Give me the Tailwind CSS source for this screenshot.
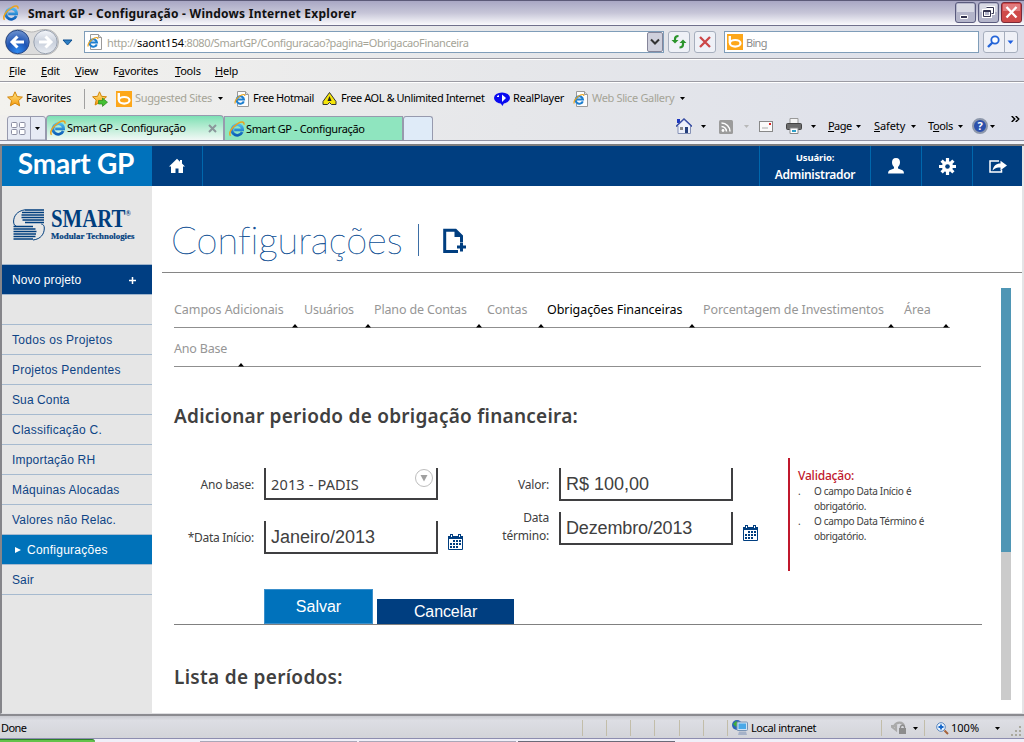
<!DOCTYPE html>
<html lang="pt-BR">
<head>
<meta charset="utf-8">
<title>Smart GP - Configuração</title>
<script src="https://cdn.jsdelivr.net/npm/@tailwindcss/browser@4"></script>
</head>
<body class="w-[1024px] h-[742px] overflow-hidden bg-white font-['Noto_Sans',sans-serif] text-[11px] text-black">
<svg class="absolute w-0 h-0">
  <defs>
    <linearGradient id="ieb" x1="0" y1="0" x2="0" y2="1"><stop offset="0" stop-color="#4cb8f0"/><stop offset="1" stop-color="#0d5fb8"/></linearGradient>
    <radialGradient id="back" cx=".5" cy=".9" r=".9"><stop offset="0" stop-color="#2f8af0"/><stop offset=".5" stop-color="#1f55b5"/><stop offset="1" stop-color="#6f93cf"/></radialGradient>
    <linearGradient id="fwd" x1="0" y1="0" x2="0" y2="1"><stop offset="0" stop-color="#f4f6fa"/><stop offset=".5" stop-color="#c9d0dc"/><stop offset="1" stop-color="#e8ecf2"/></linearGradient>
    <linearGradient id="star" x1="0" y1="0" x2="0" y2="1"><stop offset="0" stop-color="#ffe98a"/><stop offset="1" stop-color="#f59a0c"/></linearGradient>
  </defs>
  <symbol id="ie" viewBox="0 0 16 16">
    <path d="M13.2 11A5.300 5.300 0 1 1 13.600 8.900H5.200" fill="none" stroke="url(#ieb)" stroke-width="2.800"/>
    <path d="M1.600 14.800C-1 12 3.500 5.500 9 2.300c3.500-2 6.400-1.900 6 1.300" fill="none" stroke="#eba31e" stroke-width="1.500"/>
  </symbol>
  <symbol id="iepage" viewBox="0 0 16 16">
    <path d="M3.500.5h8l3 3v12h-11z" fill="#fdfdfd" stroke="#9a9a9a"/><path d="M11.500.5v3h3" fill="#ddd" stroke="#9a9a9a"/>
    <path d="M9.800 10.300A3.700 3.700 0 1 1 10 8.600H4" fill="none" stroke="#1d7fd0" stroke-width="2"/>
    <path d="M1.200 12.500C.3 10 4 5.500 7.500 4c2-.8 3.500-.8 3.300 1" fill="none" stroke="#eba31e" stroke-width="1.200"/>
  </symbol>
  <symbol id="bing" viewBox="0 0 16 16"><path d="M0 0h16v16H0z" fill="#fda71a"/><path d="M2.800 2v7" stroke="#fff" stroke-width="2.400"/><ellipse cx="8.200" cy="9.300" rx="5.300" ry="3.300" fill="none" stroke="#fff" stroke-width="2.200"/></symbol>
  <symbol id="dn" viewBox="0 0 5 3"><path d="M0 0h5L2.500 3z" fill="currentColor"/></symbol>
  <symbol id="cal" viewBox="0 0 15 16"><path d="M.5 3.500h14v12H.5z" fill="#fff" stroke="#003e80"/><path d="M0 2h15v3H0zM2 0h3v3H2zM10 0h3v3h-3z" fill="#003e80"/><path d="M3 1h1v2H3zM11 1h1v2h-1z" fill="#fff"/><path d="M5 6h2v2H5zM8 6h2v2H8zM11 6h2v2h-2zM2 9h2v2H2zM5 9h2v2H5zM8 9h2v2H8zM11 9h2v2h-2zM2 12h2v2H2zM5 12h2v2H5zM8 12h2v2H8z" fill="#003e80"/></symbol>
</svg>

<!-- Title bar -->
<div class="h-[26px] border-t border-[#5c5a78] border-b border-b-[#70708c] bg-linear-to-b from-[#a9a7c4] via-[#c7c6d8] to-[#fbfbfd] flex items-center pl-[3px] pr-[2px]">
  <svg class="w-4 h-4"><use href="#ie"/></svg>
  <span class="ml-[9px] mt-px text-[12px] font-bold tracking-[0.24px] whitespace-nowrap text-[#111]">Smart GP - Configuração - Windows Internet Explorer</span>
  <div class="ml-auto flex gap-[2px] -mt-px">
    <svg class="w-[21px] h-[21px]" viewBox="0 0 21 21"><rect x=".5" y=".5" width="20" height="20" rx="2.500" fill="#b4b5ca" stroke="#5a5b7e"/><path d="M2 2h17v8H2z" fill="#d8d9e4"/><path d="M5.500 13.500h7v3h-7z" fill="#33334f" stroke="#fff"/></svg>
    <svg class="w-[21px] h-[21px]" viewBox="0 0 21 21"><rect x=".5" y=".5" width="20" height="20" rx="2.500" fill="#b4b5ca" stroke="#5a5b7e"/><path d="M2 2h17v8H2z" fill="#d8d9e4"/><path d="M8.500 5.500h7v6h-2M5.500 8.500h7v6h-7z" fill="none" stroke="#fff" stroke-width="3"/><path d="M8.500 5.500h7v6h-2M5.500 8.500h7v6h-7zM5.500 9.500h7" fill="none" stroke="#33334f"/></svg>
    <svg class="w-[21px] h-[21px]" viewBox="0 0 21 21"><rect x=".5" y=".5" width="20" height="20" rx="2.500" fill="#cf4a4a" stroke="#7b2a38"/><path d="M2 2h17v7H2z" fill="#e07a7c"/><path d="M5.500 5l10 10.500M15.500 5l-10 10.500" stroke="#fff" stroke-width="2.400"/></svg>
  </div>
</div>

<!-- Address row -->
<div class="h-[33px] bg-linear-to-r from-[#f3f2ee] via-[#e6e7ea] to-[#dcdfea] border-b border-[#9b9ba3] flex items-center pl-1">
  <svg class="w-[72px] h-[28px] shrink-0" viewBox="0 0 72 28">
    <path d="M14 1.500C20 1 22 4 27.500 4S35 1 42 1.500a12.500 12.500 0 0 1 0 25H14a12.500 12.500 0 0 1 0-25z" fill="#dcdcdc" stroke="#b5b5b5"/>
    <circle cx="13.500" cy="14" r="11.700" fill="url(#back)" stroke="#2a4a86"/><path d="M20 14H9M13.500 8.500L8 14l5.500 5.500" fill="none" stroke="#fff" stroke-width="3"/>
    <circle cx="41.500" cy="14" r="11.700" fill="url(#fwd)" stroke="#9aa3b1"/><path d="M35 14h11M41.500 8.500L47 14l-5.500 5.500" fill="none" stroke="#fff" stroke-width="3"/>
    <path d="M59 12h9l-4.500 5z" fill="#2d7fc4" stroke="#0d4f90"/>
  </svg>
  <div class="ml-2 w-[580px] h-[22px] bg-white border border-[#7f9db9] flex items-center pl-[2px] shrink-0">
    <svg class="w-4 h-4"><use href="#iepage"/></svg>
    <span class="ml-[4px] mt-[2px] text-[#a5a497] whitespace-nowrap tracking-[-0.38px]">http://<span class="text-black tracking-[-0.1px]">saont154</span>:8080/SmartGP/Configuracao?pagina=ObrigacaoFinanceira</span>
    <svg class="ml-auto w-4 h-5" viewBox="0 0 16 20"><rect x=".5" y=".5" width="15" height="19" rx="1.500" fill="#cfd0dc" stroke="#85859a"/><path d="M4 7.500l4 4 4-4" fill="none" stroke="#333" stroke-width="2"/></svg>
  </div>
  <svg class="ml-1 w-[22px] h-[22px] shrink-0" viewBox="0 0 22 22"><rect x=".5" y=".5" width="21" height="21" rx="2.500" fill="#eff1f7" stroke="#a6aebd"/><path d="M10.500 5C7.500 5 7 6.500 7 8v2M11.500 16.500c3 0 3.500-1.500 3.500-3v-2" fill="none" stroke="#2b942b" stroke-width="2.200"/><path d="M3.500 9h7L7 12.500zM11.500 12h7L15 8.500z" fill="#2b942b"/></svg>
  <svg class="ml-1 w-[22px] h-[22px] shrink-0" viewBox="0 0 22 22"><rect x=".5" y=".5" width="21" height="21" rx="2.500" fill="#eff1f7" stroke="#a6aebd"/><path d="M6 6l10 10M16 6L6 16" stroke="#cc4647" stroke-width="2.300"/></svg>
  <div class="ml-[8px] w-[255px] h-[22px] bg-white border border-[#7f9db9] flex items-center pl-[2px] shrink-0">
    <svg class="w-4 h-4"><use href="#bing"/></svg><span class="ml-[3px] mt-[2px] tracking-[-0.7px] text-[#8b8b8b]">Bing</span>
  </div>
  <svg class="ml-1 w-[35px] h-[22px] shrink-0" viewBox="0 0 35 22"><rect x=".5" y=".5" width="34" height="21" rx="2.500" fill="#eff1f7" stroke="#a6aebd"/><path d="M21.500 1v20" stroke="#a6aebd"/><circle cx="12" cy="9" r="3.700" fill="#fff" stroke="#2565d8" stroke-width="1.800"/><path d="M9.500 11.500L5 16" stroke="#2565d8" stroke-width="2.400"/><path d="M24.500 9.500h6l-3 3.500z" fill="#1e5fe0"/></svg>
</div>

<!-- Menu row -->
<div class="h-[23px] bg-linear-to-r from-[#f3f2ee] via-[#e6e7ea] to-[#dcdfea] border-t border-t-white border-b border-b-[#9b9ba3] flex items-center pt-[2px] pl-[9px] tracking-[-0.2px]">
  <span class="w-[32px]"><u>F</u>ile</span><span class="w-[34px]"><u>E</u>dit</span><span class="w-[38px]"><u>V</u>iew</span><span class="w-[62px]">F<u>a</u>vorites</span><span class="w-[40px]"><u>T</u>ools</span><span><u>H</u>elp</span>
</div>

<!-- Favorites row -->
<div class="h-[33px] bg-linear-to-r from-[#f3f2ee] via-[#e6e7ea] to-[#dcdfea] border-t border-white flex items-center pb-px pl-[7px] whitespace-nowrap">
  <svg class="w-4 h-4 shrink-0" viewBox="0 0 16 16"><path d="M8 .8l2.200 4.800 5.200.5-3.900 3.500 1.100 5.200L8 12.100l-4.600 2.700 1.100-5.200L.6 6.100l5.200-.5z" fill="url(#star)" stroke="#d38408"/></svg>
  <span class="ml-[3px] w-[58px] tracking-[-0.2px]">Favorites</span>
  <div class="w-px h-5 bg-[#a0a0a0] mr-[7px]"></div>
  <svg class="w-4 h-4 shrink-0" viewBox="0 0 16 16"><path d="M7.500.8l2 4.500 5 .5L10.800 9l1.100 5-4.400-2.500L3.100 14l1.100-5L.6 5.800l5-.5z" fill="url(#star)" stroke="#d38408"/><path d="M6.500 9.500h4V7l5 4.200-5 4.200V13h-4z" fill="#44c034" stroke="#2a8a20" stroke-width=".7"/></svg>
  <svg class="w-4 h-4 ml-2 shrink-0"><use href="#bing"/></svg>
  <span class="ml-[3px] w-[83px] text-[#a5a497] tracking-[-0.33px]">Suggested Sites</span>
  <svg class="w-[5px] h-[3px] mr-[11px]"><use href="#dn"/></svg>
  <svg class="w-4 h-4 shrink-0"><use href="#iepage"/></svg>
  <span class="ml-[3px] w-[70px] tracking-[-0.45px]">Free Hotmail</span>
  <svg class="w-4 h-4 shrink-0 -ml-px" viewBox="0 0 16 16"><path d="M7.500 1.500L1 10.500v3h4.500l2-2 2 2H14v-3z" fill="#f5e50a" stroke="#333"/><path d="M7.500 5l-2 5h4z" fill="#222"/></svg>
  <span class="ml-[3px] w-[153px] tracking-[-0.43px]">Free AOL &amp; Unlimited Internet</span>
  <svg class="w-4 h-4 shrink-0" viewBox="0 0 16 16"><ellipse cx="8" cy="7" rx="8" ry="5.500" fill="#0a0af0"/><path d="M5 10l3.500 5 2-4z" fill="#0a0af0"/><path d="M8 3.500l4 3.500-4 4z" fill="#fff"/><path d="M3 5l2-1v2H3z" fill="#fff"/></svg>
  <span class="ml-[3px] w-[61px] tracking-[-0.3px]">RealPlayer</span>
  <svg class="w-4 h-4 shrink-0 -ml-px"><use href="#iepage"/></svg>
  <span class="ml-[3px] w-[88px] text-[#a5a497] tracking-[-0.35px]">Web Slice Gallery</span>
  <svg class="w-[5px] h-[3px]"><use href="#dn"/></svg>
</div>

<!-- Tab row -->
<div class="h-[26px] bg-linear-to-r from-[#f1f0ee] via-[#e6e7ea] to-[#dcdfea] border-b border-[#9192a4] flex items-end whitespace-nowrap">
  <svg class="ml-[7px] w-[39px] h-[24px] shrink-0" viewBox="0 0 39 24"><path d="M.5 24V3Q.5.5 3 .5h33q2.500 0 2.500 2.500v21z" fill="#e6eaf4" stroke="#979aae"/><path d="M23.500 1v23" stroke="#979aae"/><g fill="#fff" stroke="#8b8ea2"><rect x="4.500" y="6.500" width="5.500" height="5" rx="1"/><rect x="12.500" y="6.500" width="5.500" height="5" rx="1"/><rect x="4.500" y="13.500" width="5.500" height="5" rx="1"/><rect x="12.500" y="13.500" width="5.500" height="5" rx="1"/></g><path d="M28 11h5l-2.500 3z"/></svg>
  <div class="w-[178px] h-[25px] border border-b-0 border-[#979aae] rounded-t-[4px] bg-linear-to-b from-[#7be0b4] to-[#f1f8f6] flex items-center pl-[3px]">
    <svg class="w-4 h-4"><use href="#ie"/></svg><span class="ml-px tracking-[-0.37px]">Smart GP - Configuração</span>
    <svg class="ml-auto mr-[6px] w-[9px] h-[9px]" viewBox="0 0 9 9"><path d="M1 1l7 7M8 1L1 8" stroke="#8b979b" stroke-width="2"/></svg>
  </div>
  <div class="w-[179px] h-[24px] border border-b-0 border-[#979aae] bg-[#8fe5bf] flex items-center pl-[4px] pt-px">
    <svg class="w-4 h-4"><use href="#ie"/></svg><span class="ml-px tracking-[-0.37px]">Smart GP - Configuração</span>
  </div>
  <div class="w-[30px] h-[24px] border border-b-0 border-[#979aae] rounded-t-[3px] bg-[#dfebf8]"></div>
  <div class="ml-[243px] h-[26px] flex items-center pb-[2px]">
    <svg class="w-4 h-4 shrink-0" viewBox="0 0 16 16"><path d="M1 1h3v4H1z" fill="#1d37c0"/><path d="M8 1L.5 8H2v7.500h12.500V8H16z" fill="#eef1fa" stroke="#8591b5"/><path d="M0 8.500L8 1l8 7.500" fill="none" stroke="#3a4fa5" stroke-width="1.500"/><path d="M9 9h3v6H9z" fill="#25407c"/><path d="M4 9h3v3H4z" fill="#888"/></svg>
    <svg class="w-[5px] h-[3px] ml-[9px]"><use href="#dn"/></svg>
    <svg class="w-[14px] h-[14px] ml-[13px] mt-px shrink-0" viewBox="0 0 14 14"><rect width="14" height="14" rx="1.500" fill="#9b9b9b"/><circle cx="4" cy="10.500" r="1.400" fill="#fff"/><path d="M2.500 6.500a5 5 0 0 1 5 5M2.500 3a8.500 8.500 0 0 1 8.500 8.500" fill="none" stroke="#fff" stroke-width="1.500"/></svg>
    <svg class="w-[5px] h-[3px] ml-[11px] text-[#b8b8b8]"><use href="#dn"/></svg>
    <svg class="w-[14px] h-[11px] ml-[10px] shrink-0" viewBox="0 0 14 11"><rect x=".5" y=".5" width="13" height="10" fill="#fafafa" stroke="#888"/><path d="M10 2h2v2h-2z" fill="#d22"/><path d="M3 7h6" stroke="#aaa"/></svg>
    <svg class="w-4 h-4 ml-[13px] shrink-0" viewBox="0 0 16 16"><path d="M4 .5h8V6H4z" fill="#f5f5f5" stroke="#999"/><rect x=".5" y="5.500" width="15" height="6" rx="1" fill="#6b6b6b" stroke="#444"/><path d="M4 10h8v5.500H4z" fill="#fff" stroke="#888"/><path d="M6 12h4v2H6z" fill="#2f9fc8"/></svg>
    <svg class="w-[5px] h-[3px] ml-[9px]"><use href="#dn"/></svg>
    <span class="ml-[12px] w-[28px] tracking-[-0.55px]"><u>P</u>age</span><svg class="w-[5px] h-[3px]"><use href="#dn"/></svg>
    <span class="ml-[13px] w-[37px] tracking-[-0.1px]"><u>S</u>afety</span><svg class="w-[5px] h-[3px]"><use href="#dn"/></svg>
    <span class="ml-[12px] w-[30px] tracking-[-0.4px]">T<u>o</u>ols</span><svg class="w-[5px] h-[3px]"><use href="#dn"/></svg>
    <div class="ml-[9px] w-4 h-4 rounded-full bg-[#2c50ac] border-2 border-[#8d97ab] text-white font-bold text-[11px] leading-[12px] text-center">?</div>
    <svg class="w-[5px] h-[3px] ml-[2px]"><use href="#dn"/></svg>
    <svg class="ml-[16px] -mt-[14px] w-[9px] h-[6px]" viewBox="0 0 9 6"><path d="M.7 0l3 3-3 3M4.700 0l3 3-3 3" fill="none" stroke="#000" stroke-width="1.500"/></svg>
  </div>
</div>
<div class="h-[5px] bg-[#f1f2f8] border-b-2 border-[#7e7e80]"></div>

<!-- Application -->
<div class="h-[568px] flex border-l-2 border-l-[#85858a] border-r-2 border-r-[#e4e4e6] border-b border-b-[#dfdfe2]">
  <aside class="w-[150px] shrink-0 bg-[#e6e6e6] font-['Liberation_Sans',sans-serif] text-[12px] text-[#0e4485]">
    <div class="h-[40px] bg-[#0072bc] text-white font-['Lato',sans-serif] font-bold text-[28px] leading-[34px] text-center tracking-[-0.2px] whitespace-nowrap pr-[2px]">Smart GP</div>
    <div class="h-[78px] flex items-center pl-[11px]">
      <svg class="w-8 h-8 shrink-0" viewBox="0 0 32 32"><g stroke="#003e7e" stroke-width="1.700"><path d="M12 1h19M9 3.500h22M8.500 6H31M8.500 8.500H31M9.500 11H31M12 13.500h19"/><path d="M.5 17.500H20M.5 20h22M.5 22.500h23M.5 25H23M.5 27.500h22M.5 30H20"/></g><path d="M12 .8C4 2 .5 7 .6 13c.3 3 1 3.500 2.500 3.800M20 31c8-1 11.300-6 11.300-12 0-2.500-1-3.500-3-4" fill="none" stroke="#003e7e" stroke-width="1"/></svg>
      <div class="ml-[6px] font-['Liberation_Serif',serif] font-bold text-[#003e7e] whitespace-nowrap">
        <div class="flex items-start h-[23px] w-[92px] origin-left scale-x-[0.8]"><span class="text-[26px] leading-[22px]">SMART</span><span class="text-[9px] leading-[9px] mt-px">®</span></div>
        <div class="w-[80px] origin-left scale-x-[0.98] text-[9px] leading-[11px] [-webkit-text-stroke:0.2px_#003e7e]">Modular Technologies</div>
      </div>
    </div>
    <div class="h-[31px] border-y border-[#9fb4cb] bg-[#003e82] text-white flex items-center pl-[10px] pr-[16px] justify-between tracking-[0.1px]"><span>Novo projeto</span><svg class="w-[7px] h-[7px] mt-px" viewBox="0 0 7 7"><path d="M3.500 0v7M0 3.500h7" stroke="#fff" stroke-width="1.500"/></svg></div>
    <div class="h-[30px] border-b border-[#a6bacf]"></div>
    <div class="h-[30px] border-b border-[#a6bacf] flex items-center pl-[10px] tracking-[0.3px]">Todos os Projetos</div>
    <div class="h-[30px] border-b border-[#a6bacf] flex items-center pl-[10px] tracking-[0.22px]">Projetos Pendentes</div>
    <div class="h-[30px] border-b border-[#a6bacf] flex items-center pl-[10px] tracking-[0.1px]">Sua Conta</div>
    <div class="h-[30px] border-b border-[#a6bacf] flex items-center pl-[10px] tracking-[0.25px]">Classificação C.</div>
    <div class="h-[30px] border-b border-[#a6bacf] flex items-center pl-[10px] tracking-[0.2px]">Importação RH</div>
    <div class="h-[30px] border-b border-[#a6bacf] flex items-center pl-[10px] tracking-[0.2px]">Máquinas Alocadas</div>
    <div class="h-[30px] border-b border-[#a6bacf] flex items-center pl-[10px] tracking-[0.2px]">Valores não Relac.</div>
    <div class="h-[30px] border-b border-[#a6bacf] bg-[#0072b9] text-white flex items-center pl-[13px] tracking-[0.25px]"><svg class="w-[6px] h-[6px] mr-[6px]" viewBox="0 0 6 6"><path d="M0 0l6 3-6 3z" fill="#fff"/></svg>Configurações</div>
    <div class="h-[30px] border-b border-[#a6bacf] flex items-center pl-[10px] tracking-[0.1px]">Sair</div>
  </aside>

  <div class="grow flex flex-col">
    <header class="h-[40px] shrink-0 bg-[#003e80] flex text-white">
      <div class="w-[51px] border-r border-[#0067ad] flex items-center justify-center"><svg class="w-4 h-4" viewBox="0 0 16 16"><path d="M8 .8L0 8.500h2V15h4.500v-4.500h3V15H14V8.500h2L13 5.500V2h-2v1.700z" fill="#fff"/></svg></div>
      <div class="ml-auto w-[112px] border-x border-[#0067ad] text-center font-bold"><div class="mt-[5px] text-[9.500px] leading-[14px] tracking-[-0.1px]">Usuário:</div><div class="text-[12px] leading-[20px] font-semibold tracking-[-0.3px]">Administrador</div></div>
      <div class="w-[51px] border-r border-[#0067ad] flex items-center justify-center"><svg class="w-4 h-4" viewBox="0 0 16 16"><path d="M8 0c3 0 4 2 4 4.300 0 2-.8 3.700-2 4.700v1.500l4.500 1.700q1.500.8 1.500 3.300H0q0-2.500 1.500-3.300L6 10.500V9C4.800 8 4 6.300 4 4.300 4 2 5 0 8 0z" fill="#fff"/></svg></div>
      <div class="w-[51px] border-r border-[#0067ad] flex items-center justify-center"><svg class="w-[17px] h-[17px]" viewBox="0 0 17 17"><g stroke="#fff" stroke-width="3.200"><path d="M8.500 0v17M0 8.500h17M2.600 2.600l11.800 11.800M14.400 2.600L2.600 14.400"/></g><circle cx="8.500" cy="8.500" r="5.500" fill="#fff"/><circle cx="8.500" cy="8.500" r="2.300" fill="#003e80"/></svg></div>
      <div class="w-[49px] flex items-center justify-center"><svg class="w-[18px] h-[13px]" viewBox="0 0 18 13"><path d="M10 1H1v11h11.500v-2.500" fill="none" stroke="#fff" stroke-width="1.500"/><path d="M11.500.8L18 5.500l-6.500 4.700V7.500C8 7.500 6 8 3.500 10.500 4.500 6 7 3.500 11.500 3.500z" fill="#fff"/></svg></div>
    </header>
    <div class="ml-[10px] h-[87px] shrink-0 border-b border-[#868686] flex items-center pl-[9px]">
      <h1 class="font-['Lato',sans-serif] font-thin text-[38px] leading-[44px] [font-variant-ligatures:none] [-webkit-text-stroke:0.35px_#0a4c92] text-[#0a4c92] w-[235px] whitespace-nowrap mt-[19px]">Configurações</h1>
      <div class="ml-[12px] w-px h-[32px] bg-[#3d6ea5] mt-[22px]"></div>
      <svg class="ml-[24px] mt-[23px] w-6 h-[26px]" viewBox="0 0 24 26"><path d="M15 23.500H1.700V2.200h10.800l6 6V14" fill="none" stroke="#003e80" stroke-width="3"/><path d="M11.500 2v7h7" fill="#003e80"/><path d="M18.500 14.500v9M14 19h9" stroke="#003e80" stroke-width="3"/></svg>
    </div>
    <div class="grow flex pl-[22px]">
      <main class="w-[808px] text-[#404040]">
        <nav class="mt-[17px] text-[12.500px] text-[#969696] whitespace-nowrap tracking-[-0.06px]">
          <div class="w-[776px] h-[38px] border-b border-[#8f8f8f] flex items-center pt-[3px]">
            <span class="w-[130px]">Campos Adicionais</span><span class="w-[70px] tracking-[-0.25px]">Usuários</span><span class="w-[113px] tracking-[-0.15px]">Plano de Contas</span><span class="w-[60px]">Contas</span><span class="w-[156px] text-black">Obrigações Financeiras</span><span class="w-[201px] tracking-[-0.1px]">Porcentagem de Investimentos</span><span>Área</span>
          </div>
          <svg class="-mt-1 w-[776px] h-[4px]" viewBox="0 0 776 4"><path d="M118 3.500l3-3.500 3 3.500zM191 3.500l3-3.500 3 3.500zM302 3.500l3-3.500 3 3.500zM364 3.500l3-3.500 3 3.500zM515 3.500l3-3.500 3 3.500zM714 3.500l3-3.500 3 3.500zM769 3.500l3-3.500 3 3.500z"/></svg>
          <div class="w-[807px] h-[39px] border-b border-[#8f8f8f] flex items-center pt-[5px] tracking-[-0.2px]">Ano Base</div>
          <svg class="-mt-1 w-[776px] h-[4px]" viewBox="0 0 776 4"><path d="M64 3.500L67 0l3 3.500z"/></svg>
        </nav>
        <h2 class="mt-[35px] h-[28px] leading-[28px] text-[19px] font-semibold tracking-[0.25px] whitespace-nowrap">Adicionar periodo de obrigação financeira:</h2>
        <section class="mt-[28px] h-[113px] flex text-[12px]">
          <div class="w-[80px] text-right leading-[18px] whitespace-nowrap tracking-[-0.2px]"><div class="mt-[18px]">Ano base:</div><div class="mt-[35px] tracking-[-0.3px]">*Data Início:</div></div>
          <div class="ml-[10px] w-[174px]">
            <div class="mt-[10px] h-[32px] border-2 border-t-0 border-[#3f3f41] flex items-center pl-[5px] pt-[4px] pr-[3px] text-[14.500px] tracking-[0.15px]">2013 - PADIS<svg class="ml-auto -mt-[14px] w-[18px] h-[18px]" viewBox="0 0 18 18"><circle cx="9" cy="9" r="8.500" fill="#fff" stroke="#bdbdbd"/><path d="M5.500 6h7L9 12.500z" fill="#a0a0a0"/></svg></div>
            <div class="mt-[21px] h-[33px] border-2 border-t-0 border-[#3f3f41] pl-[5px] leading-[33px] font-['Liberation_Sans',sans-serif] text-[18px]">Janeiro/2013</div>
          </div>
          <svg class="ml-[10px] mt-[76px] w-[15px] h-4"><use href="#cal"/></svg>
          <div class="ml-[16px] w-[70px] text-right leading-[18px] tracking-[-0.2px]"><div class="mt-[18px]">Valor:</div><div class="mt-[15px]">Data<br>término:</div></div>
          <div class="ml-[10px] w-[174px] font-['Liberation_Sans',sans-serif] text-[18px]">
            <div class="mt-[10px] h-[33px] border-2 border-t-0 border-[#3f3f41] pl-[5px] leading-[33px]">R$ 100,00</div>
            <div class="mt-[11px] h-[33px] border-2 border-t-0 border-[#3f3f41] pl-[5px] leading-[33px] tracking-[-0.15px]">Dezembro/2013</div>
          </div>
          <svg class="ml-[10px] mt-[67px] w-[15px] h-4"><use href="#cal"/></svg>
          <div class="ml-[30px] h-[113px] border-l-2 border-[#c0182c] pl-[8px] whitespace-nowrap">
            <div class="mt-[9px] h-[17px] leading-[17px] text-[12px] font-medium tracking-[-0.2px] text-[#c0182c]">Validação:</div>
            <ul class="text-[10px] leading-[15px] tracking-[-0.3px]"><li class="flex"><span class="w-[16px]">.</span><span>O campo Data Início é<br>obrigatório.</span></li><li class="flex"><span class="w-[16px]">.</span><span>O campo Data Término é<br>obrigatório.</span></li></ul>
          </div>
        </section>
        <div class="mt-[18px] h-[36px] border-b border-[#808080] pl-[90px] flex items-end gap-1 font-['Liberation_Sans',sans-serif] text-[16px] text-white text-center">
          <div class="w-[109px] h-[35px] bg-[#0072bc] border border-[#3a8fcb] leading-[33px]">Salvar</div>
          <div class="w-[137px] h-[25px] bg-[#003e80] leading-[25px] tracking-[-0.1px]">Cancelar</div>
        </div>
        <h2 class="mt-[38px] h-[28px] leading-[28px] text-[19px] font-semibold tracking-[0.3px] whitespace-nowrap">Lista de períodos:</h2>
      </main>
      <div class="ml-[19px] mt-[15px] w-[10px] h-[412px] bg-[#cbcbcb]"><div class="h-[264px] bg-[#4f96b5]"></div></div>
    </div>
  </div>
</div>

<!-- Status bar -->
<div class="h-[25px] border-t-2 border-[#8b8b90] bg-linear-to-b from-[#c9cad0] via-[#dddee4] via-20% to-[#d3d4d9] border-b border-b-[#8d8db0] flex items-center pl-px pt-[2px] whitespace-nowrap">
  <span class="w-[581px] tracking-[-0.6px]">Done</span>
  <div class="w-[146px] flex justify-between h-4"><i class="w-px bg-[#c2bda9]"></i><i class="w-px bg-[#c2bda9]"></i><i class="w-px bg-[#c2bda9]"></i><i class="w-px bg-[#c2bda9]"></i><i class="w-px bg-[#c2bda9]"></i><i class="w-px bg-[#c2bda9]"></i><i class="w-px bg-[#c2bda9]"></i></div>
  <svg class="ml-[4px] w-4 h-4 shrink-0" viewBox="0 0 16 16"><circle cx="5" cy="5" r="5" fill="#2b64b8"/><path d="M1 4l3-3 3 2-3 4z" fill="#3fae3a"/><rect x="5" y="2" width="10.500" height="8.500" rx="1" fill="#cfe3f5" stroke="#7893b3"/><path d="M6.500 3.500h7.500V9H6.500z" fill="#49a8e8"/><path d="M7 11.500h7l1 3.500H6z" fill="#a6b2c8"/></svg>
  <span class="ml-[3px] w-[130px] tracking-[-0.4px]">Local intranet</span>
  <div class="w-px h-4 bg-[#c2bda9]"></div>
  <svg class="ml-[9px] w-4 h-4 shrink-0" viewBox="0 0 16 16"><path d="M0 6h5v4zM3 6c3-5 9-4 10 0" fill="none" stroke="#aaa" stroke-width="2.200"/><rect x="8" y="8" width="7" height="6" fill="#8c8c8c"/><path d="M9.500 8V6.500q2-2.500 4 0V8" fill="none" stroke="#8c8c8c" stroke-width="1.300"/></svg>
  <svg class="w-[5px] h-[3px] ml-[6px] mr-[6px]"><use href="#dn"/></svg>
  <div class="w-px h-4 bg-[#c2bda9]"></div>
  <svg class="ml-[11px] w-[13px] h-[13px] shrink-0" viewBox="0 0 13 13"><circle cx="5" cy="5" r="4.300" fill="#eaf4ff" stroke="#5a86bd"/><path d="M5 2.500v5M2.500 5h5" stroke="#1566c9" stroke-width="1.800"/><path d="M8.500 8.500l3.500 3.500" stroke="#a5633a" stroke-width="2"/></svg>
  <span class="ml-[2px] w-[44px]">100%</span>
  <svg class="w-[5px] h-[3px]"><use href="#dn"/></svg>
  <svg class="ml-auto mr-px mt-2 w-3 h-3" viewBox="0 0 12 12" fill="#aaa99d"><path d="M8 0h2v2H8zM4 4h2v2H4zM8 4h2v2H8zM0 8h2v2H0zM4 8h2v2H4zM8 8h2v2H8z"/></svg>
</div>
<div class="h-[3px] flex gap-[2px] bg-[#f0eff8]"><div class="w-[95px] bg-[#62c24a] border-t border-[#2d7d2a] rounded-tr-[3px]"></div><div class="mt-[2px] ml-[103px] w-[157px] bg-[#a9a7b8]"></div><div class="mt-[2px] w-[157px] bg-[#a9a7b8]"></div><div class="mt-[2px] w-[157px] bg-[#6a6a78]"></div></div>
</body>
</html>
